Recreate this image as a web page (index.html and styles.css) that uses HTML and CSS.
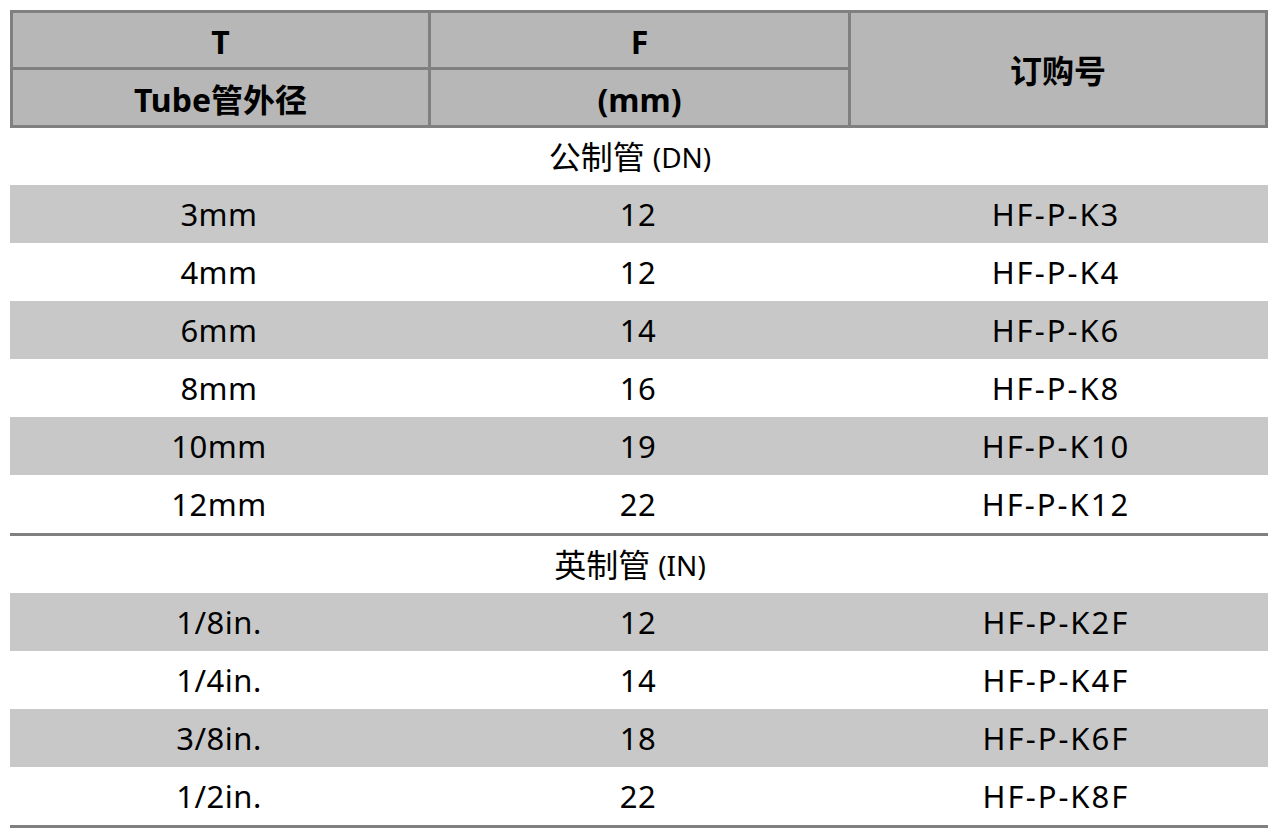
FILE: index.html
```html
<!DOCTYPE html>
<html lang="zh">
<head>
<meta charset="utf-8">
<title>订购号</title>
<link rel="stylesheet" href="styles.css">
</head>
<body>
<div class="sheet">
  <div class="head">
    <div class="hc">T</div>
    <div class="hc">F</div>
    <div class="hc span2">订购号</div>
    <div class="hc">Tube管外径</div>
    <div class="hc">(mm)</div>
  </div>

  <div class="section">公制管 <span class="abbr">(DN)</span></div>
  <div class="row shade"><div>3mm</div><div>12</div><div class="code">HF-P-K3</div></div>
  <div class="row"><div>4mm</div><div>12</div><div class="code">HF-P-K4</div></div>
  <div class="row shade"><div>6mm</div><div>14</div><div class="code">HF-P-K6</div></div>
  <div class="row"><div>8mm</div><div>16</div><div class="code">HF-P-K8</div></div>
  <div class="row shade"><div>10mm</div><div>19</div><div class="code">HF-P-K10</div></div>
  <div class="row"><div>12mm</div><div>22</div><div class="code">HF-P-K12</div></div>
  <div class="rule"></div>

  <div class="section">英制管 <span class="abbr">(IN)</span></div>
  <div class="row shade"><div>1/8in.</div><div>12</div><div class="code">HF-P-K2F</div></div>
  <div class="row"><div>1/4in.</div><div>14</div><div class="code">HF-P-K4F</div></div>
  <div class="row shade"><div>3/8in.</div><div>18</div><div class="code">HF-P-K6F</div></div>
  <div class="row"><div>1/2in.</div><div>22</div><div class="code">HF-P-K8F</div></div>
  <div class="rule"></div>
</div>
</body>
</html>
```
FILE: styles.css
```css
html, body {
  margin: 0;
  padding: 0;
  background: #ffffff;
}

body {
  font-family: "Noto Sans", "Noto Sans CJK SC", sans-serif;
  color: #000000;
}

.sheet {
  width: 1258px;
  margin: 10px 0 0 10px;
}

.head {
  display: grid;
  grid-template-columns: 415px 417px 414px;
  grid-template-rows: 54px 55px;
  gap: 3px;
  padding: 3px;
  background: #808080;
}

.hc {
  background: #b7b7b7;
  display: flex;
  align-items: center;
  justify-content: center;
  font-weight: 700;
  font-size: 32px;
  line-height: 1;
  padding-top: 4px;
  box-sizing: border-box;
}

.span2 {
  grid-column: 3;
  grid-row: 1 / span 2;
}

.section {
  height: 57px;
  display: flex;
  align-items: center;
  justify-content: center;
  font-size: 32px;
  line-height: 1;
  padding-right: 18px;
}

.abbr {
  font-size: 28px;
  margin-left: 8px;
}

.row {
  display: grid;
  grid-template-columns: 418px 420px 420px;
  height: 58px;
  align-items: center;
  font-size: 31px;
  line-height: 1;
  letter-spacing: 0.5px;
}

.row > div {
  text-align: center;
}

.row > .code {
  letter-spacing: 2px;
  padding-right: 4px;
}

.shade {
  background: #c8c8c8;
}

.rule {
  height: 3px;
  background: #808080;
}
```
